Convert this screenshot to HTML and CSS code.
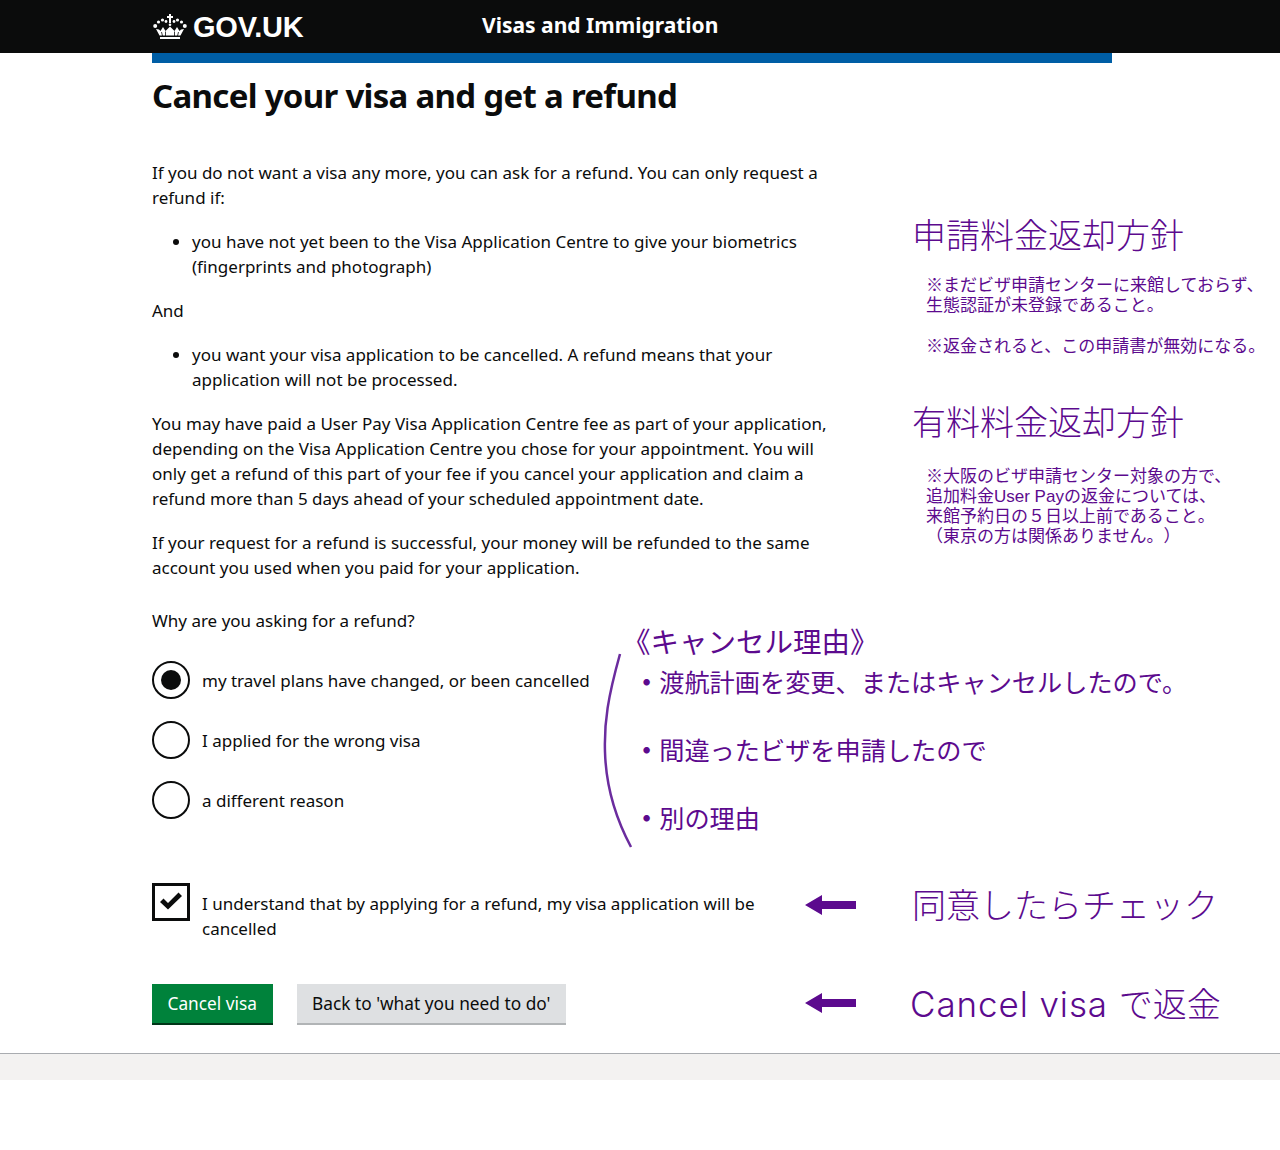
FILE: index.html
```html
<!DOCTYPE html>
<html lang="en">
<head>
<meta charset="utf-8">
<title>Cancel your visa and get a refund</title>
<link rel="stylesheet" href="styles.css">
</head>
<body>
<header class="top">
  <div class="top-inner">
    <a class="logo">
      <svg class="crown" viewBox="0 0 34 25" aria-hidden="true">
        <g fill="#fff">
          <path d="M16 0h2v2h2v2h-2v5h-2V4h-2V2h2z"/>
          <circle cx="17" cy="10.800" r="1.300"/>
          <circle cx="13" cy="7.500" r="1.400"/><circle cx="9.500" cy="6" r="1.600"/><circle cx="5.500" cy="8" r="1.600"/><circle cx="2.200" cy="12" r="2"/>
          <circle cx="21" cy="7.500" r="1.400"/><circle cx="24.500" cy="6" r="1.600"/><circle cx="28.500" cy="8" r="1.600"/><circle cx="31.800" cy="12" r="2"/>
          <path d="M3 15l3 .5 1.500 1.500L10 13l2.500 4L17 12.500l4.500 4.500L24 13l2.500 4 1.500-1.500 3-.5-3.500 6.500H6.500z"/>
          <path d="M7 23h20v2H7z"/>
        </g>
        <path d="M12.500 17.500v4.500M21.500 17.500v4.500M8.500 18l1 4M25.500 18l-1 4" stroke="#0b0c0c" stroke-width=".8"/>
      </svg>
      <span class="logo-text">GOV.UK</span>
    </a>
    <span class="service">Visas and Immigration</span>
  </div>
</header>

<div class="wrap">
  <div class="bluebar"></div>
  <main class="main">
    <h1 class="title">Cancel your visa and get a refund</h1>
    <p class="para first">If you do not want a visa any more, you can ask for a refund. You can only request a<br>refund if:</p>
    <ul class="bullets">
      <li>you have not yet been to the Visa Application Centre to give your biometrics<br>(fingerprints and photograph)</li>
    </ul>
    <p class="para">And</p>
    <ul class="bullets">
      <li>you want your visa application to be cancelled. A refund means that your<br>application will not be processed.</li>
    </ul>
    <p class="para">You may have paid a User Pay Visa Application Centre fee as part of your application,<br>depending on the Visa Application Centre you chose for your appointment. You will<br>only get a refund of this part of your fee if you cancel your application and claim a<br>refund more than 5 days ahead of your scheduled appointment date.</p>
    <p class="para">If your request for a refund is successful, your money will be refunded to the same<br>account you used when you paid for your application.</p>
    <p class="para question">Why are you asking for a refund?</p>
    <div class="radios">
      <div class="choice"><span class="radio on"></span><span>my travel plans have changed, or been cancelled</span></div>
      <div class="choice"><span class="radio"></span><span>I applied for the wrong visa</span></div>
      <div class="choice"><span class="radio"></span><span>a different reason</span></div>
    </div>
    <div class="agree">
      <span class="box">
        <svg class="tick" viewBox="0 0 24 20" aria-hidden="true"><path d="M1 11l3.500-3.500L9 12 19.500 1.500 23 5 9 18.500z" fill="#0b0c0c"/></svg>
      </span>
      <span class="agree-text">I understand that by applying for a refund, my visa application will be<br>cancelled</span>
    </div>
    <div class="actions">
      <a class="btn primary">Cancel visa</a>
      <a class="btn secondary">Back to 'what you need to do'</a>
    </div>
  </main>
</div>
<footer class="foot"></footer>

<aside class="note note-h n1">申請料金返却方針</aside>
<aside class="note note-s n2">※まだビザ申請センターに来館しておらず、<br>生態認証が未登録であること。</aside>
<aside class="note note-s n3">※返金されると、この申請書が無効になる。</aside>
<aside class="note note-h n4">有料料金返却方針</aside>
<aside class="note note-s n5">※大阪のビザ申請センター対象の方で、<br>追加料金User Payの返金については、<br>来館予約日の５日以上前であること。<br>（東京の方は関係ありません。）</aside>
<aside class="note note-t n6">《キャンセル理由》</aside>
<aside class="note note-m n7"><b class="dot">・</b>渡航計画を変更、またはキャンセルしたので。</aside>
<aside class="note note-m n8"><b class="dot">・</b>間違ったビザを申請したので</aside>
<aside class="note note-m n9"><b class="dot">・</b>別の理由</aside>
<aside class="note note-h n10">同意したらチェック</aside>
<aside class="note note-h n11"><span class="wide">Cancel visa </span>で返金</aside>

<svg class="brace" viewBox="0 0 40 200" aria-hidden="true"><path d="M18 2C6 45 2 70 3 100c1 35 10 65 26 95" fill="none" stroke="#6b2c9e" stroke-width="2.500"/></svg>
<svg class="arrow a1" viewBox="0 0 51 20" aria-hidden="true"><path d="M0 10L17 0v6h34v8H17v6z" fill="#5c0a8e"/></svg>
<svg class="arrow a2" viewBox="0 0 51 20" aria-hidden="true"><path d="M0 10L17 0v6h34v8H17v6z" fill="#5c0a8e"/></svg>
</body>
</html>
```
FILE: styles.css
```css
* { box-sizing: border-box; }
html, body { margin: 0; padding: 0; }
body {
  position: relative;
  height: 1150px;
  overflow: hidden;
  background: #fff;
  color: #0b0c0c;
  font-family: "Noto Sans", "Noto Sans CJK JP", sans-serif;
  font-size: 17px;
  line-height: 25px;
}
.top { height: 53px; background: #0b0c0c; color: #fff; }
.top-inner { width: 960px; margin-left: 152px; height: 53px; display: flex; align-items: center; }
.logo { display: flex; align-items: center; width: 330px; }
.crown { width: 34px; height: 25px; margin-left: 1px; margin-top: -1px; }
.logo-text {
  font-family: "Liberation Sans", Arial, sans-serif;
  font-weight: 700;
  font-size: 29px;
  margin-left: 6px;
  margin-top: 2px;
  letter-spacing: -0.2px;
}
.service { font-weight: 700; font-size: 21px; margin-top: -2px; }
.wrap { width: 960px; margin-left: 152px; }
.bluebar { height: 10px; background: #005ea5; }
.title { margin: 13px 0 0; font-size: 33px; line-height: 40px; font-weight: 700; letter-spacing: -0.7px; }
.para { margin: 19px 0 0; }
.para.first { margin-top: 44px; }
.bullets { margin: 19px 0 0; padding: 0 0 0 40px; }
.question { margin-top: 28px; }
.radios { margin-top: 28px; display: flex; flex-direction: column; gap: 22px; }
.choice { display: flex; align-items: center; height: 38px; gap: 12px; }
.radio { width: 38px; height: 38px; border: 2px solid #0b0c0c; border-radius: 50%; position: relative; flex: none; }
.radio.on::after { content: ""; position: absolute; left: 7px; top: 7px; width: 20px; height: 20px; border-radius: 50%; background: #0b0c0c; }
.agree { margin-top: 64px; display: flex; gap: 12px; align-items: flex-start; }
.box { width: 38px; height: 38px; border: 3px solid #0b0c0c; display: flex; align-items: center; justify-content: center; flex: none; }
.tick { width: 24px; height: 20px; margin-top: -3px; }
.agree-text { padding-top: 8px; }
.actions { margin-top: 43px; display: flex; gap: 24px; }
.btn { display: block; height: 41px; line-height: 39px; font-size: 17.3px; }
.primary { background: #00823b; color: #fff; border-bottom: 2px solid #003618; padding: 0 15.5px; }
.secondary { background: #dee0e2; color: #0b0c0c; border-bottom: 2px solid #b1b4b6; padding: 0 15.5px; }
.foot { position: absolute; left: 0; right: 0; top: 1053px; height: 27px; background: #f3f2f1; border-top: 1px solid #a9acb0; }

.note {
  position: absolute;
  color: #5c0a8e;
  font-family: "Liberation Sans", "Noto Sans CJK JP", sans-serif;
  font-weight: 300;
  white-space: nowrap;
  text-spacing-trim: space-all;
}
.note-h { font-size: 34px; line-height: 40px; }
.note-s { font-size: 17px; line-height: 20px; font-weight: 400; }
.note-m { font-size: 25.2px; line-height: 34px; font-weight: 400; }
.note-t { font-size: 28.5px; line-height: 34px; font-weight: 400; }
.dot { font-weight: 700; }
.wide { font-family: Inter, sans-serif; font-weight: 300; font-size: 35px; letter-spacing: 0.9px; }
.n1 { left: 912px; top: 216px; }
.n2 { left: 926px; top: 276px; }
.n3 { left: 926px; top: 337px; }
.n4 { left: 912px; top: 403px; }
.n5 { left: 926px; top: 467px; }
.n6 { left: 622px; top: 626px; }
.n7 { left: 634px; top: 666px; }
.n8 { left: 634px; top: 734px; }
.n9 { left: 634px; top: 802px; }
.n10 { left: 912px; top: 886px; }
.n11 { left: 910px; top: 984px; }
.brace { position: absolute; left: 602px; top: 652px; width: 40px; height: 200px; }
.arrow { position: absolute; left: 805px; width: 51px; height: 20px; }
.a1 { top: 895px; }
.a2 { top: 993px; }
```
